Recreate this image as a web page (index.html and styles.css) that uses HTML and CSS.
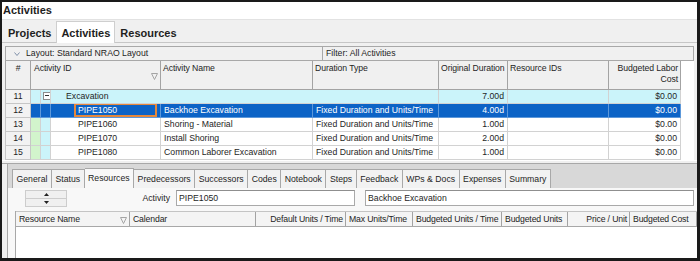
FILE: index.html
```html
<!DOCTYPE html>
<html lang="en">
<head>
<meta charset="UTF-8">
<title>Activities</title>
<link rel="stylesheet" href="styles.css">
</head>
<body>
<div class="window">
    <div class="title">Activities</div>
    <div class="tabs">
        <span class="tab">Projects</span>
        <span class="tab active">Activities</span>
        <span class="tab">Resources</span>
    </div>

    <div class="main">
        <div class="layout-bar">
            <span class="layout-name">
                <svg width="6" height="4" viewBox="0 0 6 4"><path d="M0.5 0.5 L3 3.5 L5.5 0.5" fill="none" stroke="#7f8fa8"/></svg>
                Layout: Standard NRAO Layout
            </span>
            <span class="filter">Filter: All Activities</span>
        </div>

        <table class="grid">
            <colgroup>
                <col style="width:25px"><col style="width:10px"><col style="width:10px"><col style="width:110px">
                <col style="width:152px"><col style="width:126px"><col style="width:69px"><col style="width:101px">
                <col style="width:72px"><col>
            </colgroup>
            <thead>
                <tr>
                    <th class="center">#</th>
                    <th colspan="3">
                        <div class="th-inner">Activity ID
                            <svg class="funnel" width="7" height="7" viewBox="0 0 7 7"><path d="M0.5 0.5 H6.5 L3.5 6.5 Z" fill="none" stroke="#a4a4a4"/></svg>
                        </div>
                    </th>
                    <th>Activity Name</th>
                    <th>Duration Type</th>
                    <th>Original Duration</th>
                    <th>Resource IDs</th>
                    <th class="right">Budgeted Labor<br>Cost</th>
                    <th class="fill"></th>
                </tr>
            </thead>
            <tbody>
                <tr class="wbs">
                    <td class="num">11</td>
                    <td class="strip green"></td>
                    <td class="strip cyan"><span class="toggle"></span></td>
                    <td colspan="3" class="band-name">Excavation</td>
                    <td class="right">7.00d</td>
                    <td></td>
                    <td class="right">$0.00</td>
                    <td class="fill"></td>
                </tr>
                <tr class="sel">
                    <td class="num">12</td>
                    <td class="strip"></td>
                    <td class="strip"></td>
                    <td class="id focus-cell"><div class="focus">PIPE1050</div></td>
                    <td>Backhoe Excavation</td>
                    <td>Fixed Duration and Units/Time</td>
                    <td class="right">4.00d</td>
                    <td></td>
                    <td class="right">$0.00</td>
                    <td class="fill"></td>
                </tr>
                <tr>
                    <td class="num">13</td>
                    <td class="strip green"></td>
                    <td class="strip cyan"></td>
                    <td class="id">PIPE1060</td>
                    <td>Shoring - Material</td>
                    <td>Fixed Duration and Units/Time</td>
                    <td class="right">1.00d</td>
                    <td></td>
                    <td class="right">$0.00</td>
                    <td class="fill"></td>
                </tr>
                <tr>
                    <td class="num">14</td>
                    <td class="strip green"></td>
                    <td class="strip cyan"></td>
                    <td class="id">PIPE1070</td>
                    <td>Install Shoring</td>
                    <td>Fixed Duration and Units/Time</td>
                    <td class="right">2.00d</td>
                    <td></td>
                    <td class="right">$0.00</td>
                    <td class="fill"></td>
                </tr>
                <tr>
                    <td class="num">15</td>
                    <td class="strip green"></td>
                    <td class="strip cyan"></td>
                    <td class="id">PIPE1080</td>
                    <td>Common Laborer Excavation</td>
                    <td>Fixed Duration and Units/Time</td>
                    <td class="right">1.00d</td>
                    <td></td>
                    <td class="right">$0.00</td>
                    <td class="fill"></td>
                </tr>
            </tbody>
        </table>
    </div>

    <div class="split"></div>

    <div class="details">
        <div class="dtabs">
            <span class="dtab">General</span>
            <span class="dtab">Status</span>
            <span class="dtab active">Resources</span>
            <span class="dtab">Predecessors</span>
            <span class="dtab">Successors</span>
            <span class="dtab">Codes</span>
            <span class="dtab">Notebook</span>
            <span class="dtab">Steps</span>
            <span class="dtab">Feedback</span>
            <span class="dtab">WPs &amp; Docs</span>
            <span class="dtab">Expenses</span>
            <span class="dtab">Summary</span>
        </div>
        <div class="dpanel">
            <div class="activity-row">
                <div class="spin">
                    <span class="spin-btn"><svg width="5" height="3" viewBox="0 0 5 3"><path d="M0 3 L2.5 0 L5 3 Z" fill="#222"/></svg></span>
                    <span class="spin-btn"><svg width="5" height="3" viewBox="0 0 5 3"><path d="M0 0 L2.5 3 L5 0 Z" fill="#222"/></svg></span>
                </div>
                <label class="act-label">Activity</label>
                <div class="field id-field">PIPE1050</div>
                <div class="field name-field">Backhoe Excavation</div>
            </div>
            <div class="res">
                <div class="res-head">
                    <span class="rh">Resource Name
                        <svg class="funnel" width="7" height="7" viewBox="0 0 7 7"><path d="M0.5 0.5 H6.5 L3.5 6.5 Z" fill="none" stroke="#a4a4a4"/></svg>
                    </span>
                    <span class="rh">Calendar</span>
                    <span class="rh right">Default Units / Time</span>
                    <span class="rh">Max Units/Time</span>
                    <span class="rh">Budgeted Units / Time</span>
                    <span class="rh">Budgeted Units</span>
                    <span class="rh right">Price / Unit</span>
                    <span class="rh">Budgeted Cost</span>
                </div>
            </div>
        </div>
    </div>
</div>
</body>
</html>
```

FILE: styles.css
```css
/* Global */
* {
    box-sizing: border-box;
}
body {
    margin: 0;
    font-family: "Liberation Sans", Arial, sans-serif;
    font-size: 8.7px;
    color: #1e1e1e;
}
.window {
    width: 700px;
    height: 261px;
    border: 2px solid #1a1a1a;
    border-right-width: 3px;
    border-bottom-width: 3px;
    background-color: #f0f0f0;
    overflow: hidden;
}

/* Title and top tabs */
.title {
    height: 18px;
    line-height: 17px;
    padding-left: 1px;
    background-color: #fff;
    border-bottom: 1px solid #e2e2e2;
    font-size: 11px;
    font-weight: bold;
}
.tabs {
    display: flex;
    align-items: flex-end;
    height: 23px;
    padding-left: 1px;
    border-bottom: 1px solid #c6c6c6;
}
.tab {
    padding: 0 4px;
    height: 21px;
    line-height: 22px;
    font-size: 11px;
    font-weight: bold;
    border: 1px solid transparent;
    border-bottom: none;
}
.tab.active {
    background-color: #fff;
    border-color: #cfcfcf;
    height: 22px;
    margin-bottom: -1px;
}

/* Activity table */
.main {
    padding: 3px 3px 0 3px;
}
.layout-bar {
    display: flex;
    height: 15px;
    line-height: 13px;
    border: 1px solid #a8a8a8;
    background-color: #f0f0f0;
}
.layout-name {
    display: flex;
    align-items: center;
    gap: 6px;
    width: 316px;
    padding-left: 8px;
}
.filter {
    border-left: 1px solid #a8a8a8;
    padding-left: 3px;
}
.grid {
    width: 689px;
    border-collapse: collapse;
    table-layout: fixed;
    background-color: #fff;
}
.grid th {
    height: 28px;
    padding: 2px 2px;
    background-color: #f0f0f0;
    border: 1px solid #a3a3a3;
    border-top: none;
    font-weight: normal;
    text-align: left;
    vertical-align: top;
    line-height: 11px;
    letter-spacing: -0.1px;
    white-space: nowrap;
    overflow: hidden;
}
.grid th.fill {
    background-color: #fff;
    border: none;
}
.th-inner {
    display: flex;
    justify-content: space-between;
    padding-left: 1px;
}
.th-inner .funnel {
    margin-top: 10px;
}
.grid td {
    height: 14px;
    padding: 0 3px;
    border: 1px solid #d2d2d2;
    line-height: 12px;
    white-space: nowrap;
    overflow: hidden;
}
.grid td.fill {
    border: none;
}
.grid th.center {
    text-align: center;
}
.right,
.grid th.right {
    text-align: right;
}
.grid td.num {
    text-align: center;
    background-color: #f2f2f2;
    border-color: #c6c6c6;
}
.grid td.strip {
    padding: 0;
}
.green {
    background-color: #d2f4cc;
}
.cyan {
    background-color: #cbf4fa;
}
.wbs td:not(.num):not(.fill) {
    background-color: #cbf4fa;
}
.wbs td.green {
    background-color: #d2f4cc;
}
.grid td.band-name {
    padding-left: 15px;
}
.toggle {
    display: block;
    position: relative;
    width: 8px;
    height: 8px;
    margin-left: 2px;
    border: 1px solid #8c8c8c;
    background-color: #fff;
}
.toggle::after {
    content: "";
    position: absolute;
    left: 1px;
    top: 2px;
    width: 4px;
    height: 1px;
    background-color: #333;
}
.grid td.id {
    padding-left: 27px;
}
.sel td:not(.num):not(.fill) {
    background-color: #0c63c6;
    color: #fff;
    border-color: #5d98da;
}
.grid td.focus-cell {
    padding: 0 3px 0 23px;
}
.focus {
    height: 14px;
    margin: -1px 0;
    padding-left: 2px;
    border: 2px solid #e5883b;
    line-height: 10px;
}

/* Detail panel */
.split {
    height: 4px;
    border-top: 1px solid #fff;
    border-bottom: 1px solid #a8a8a8;
}
.details {
    margin-left: 5px;
    border-left: 1px solid #a8a8a8;
}
.dtabs {
    display: flex;
    align-items: flex-end;
    height: 24px;
    padding-left: 4px;
    background-color: #d8d8d8;
}
.dtab {
    height: 19px;
    line-height: 18px;
    padding: 0 3.5px;
    background-color: #f2f2f2;
    border: 1px solid #a8a8a8;
    border-left: none;
    border-bottom: none;
}
.dtab:first-child {
    border-left: 1px solid #a8a8a8;
}
.dtab.active {
    background-color: #f8f8f8;
    height: 20px;
}
.dpanel {
    height: 72px;
    background-color: #f8f8f8;
}
.activity-row {
    display: flex;
    align-items: center;
    height: 21px;
    padding-right: 3px;
}
.spin {
    display: flex;
    flex-direction: column;
    width: 42px;
    height: 17px;
    margin-left: 17px;
    border: 1px solid #cdcdcd;
    background-color: #f0f0f0;
}
.spin-btn {
    flex: 1;
    display: flex;
    align-items: center;
    justify-content: center;
}
.spin-btn:first-child {
    border-bottom: 1px solid #cdcdcd;
}
.act-label {
    width: 109px;
    padding-right: 6px;
    text-align: right;
}
.field {
    height: 16px;
    line-height: 14px;
    padding-left: 2px;
    background-color: #fff;
    border: 1px solid #a9a9a9;
    border-top-color: #8f8f8f;
}
.id-field {
    width: 179px;
    margin-right: 10px;
}
.name-field {
    flex: 1;
}
.res {
    height: 49px;
    margin: 2px 0 0 7px;
    background-color: #fff;
    border-left: 1px solid #a8a8a8;
}
.res-head {
    display: grid;
    grid-template-columns: 114px 126px 90px 67px 89px 66px 62px 1fr;
    height: 16px;
    background-color: #f4f4f4;
    border-top: 1px solid #c4c4c4;
    border-bottom: 1px solid #a8a8a8;
}
.rh {
    display: flex;
    align-items: center;
    justify-content: space-between;
    padding: 0 2px 0 3px;
    border-right: 1px solid #a3a3a3;
    letter-spacing: -0.15px;
    white-space: nowrap;
    overflow: hidden;
}
.rh.right {
    justify-content: flex-end;
}
.rh .funnel {
    margin-top: 4px;
}
```
